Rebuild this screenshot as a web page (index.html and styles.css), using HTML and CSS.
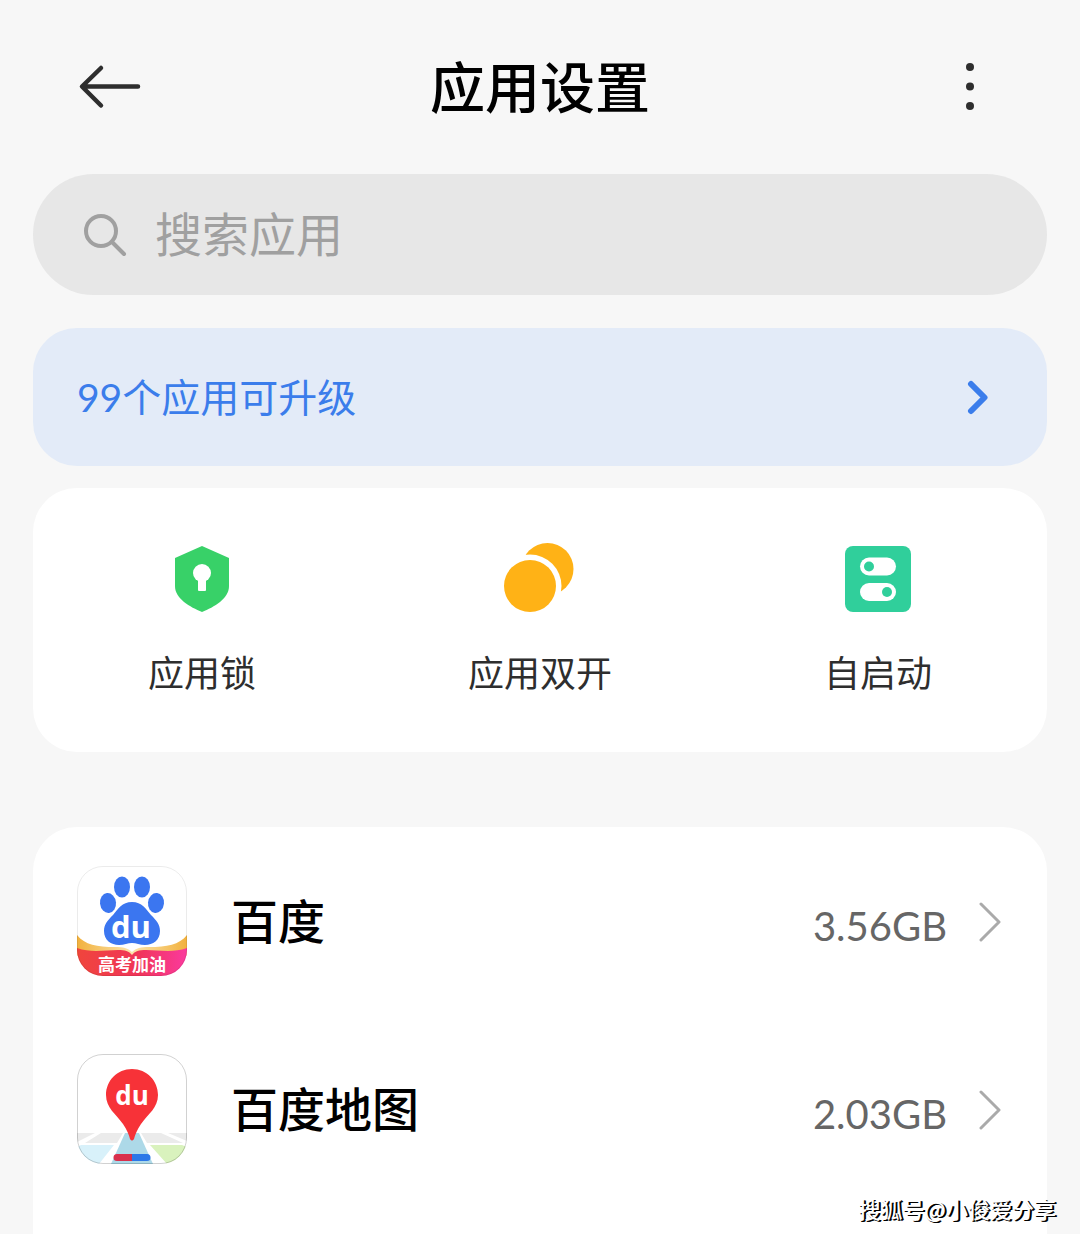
FILE: index.html
```
<!DOCTYPE html>
<html lang="zh-CN">
<head>
    <meta charset="UTF-8">
    <meta name="viewport" content="width=device-width, initial-scale=1.0">
    <title>应用设置</title>
    <link rel="stylesheet" href="styles.css">
</head>
<body>

<header class="topbar">
    <button class="icon-button" type="button" aria-label="返回">
        <svg width="64" height="48" viewBox="0 0 64 48" fill="none" stroke="#2e2e2e" stroke-width="4.5" stroke-linecap="round" stroke-linejoin="round">
            <path d="M23 5L4 23.500L23 42.500M5 23.500H60"/>
        </svg>
    </button>
    <h1 class="title">应用设置</h1>
    <button class="icon-button" type="button" aria-label="更多">
        <svg width="64" height="48" viewBox="0 0 64 48" fill="#2e2e2e">
            <circle cx="32" cy="4" r="4"/>
            <circle cx="32" cy="23.500" r="4"/>
            <circle cx="32" cy="43" r="4"/>
        </svg>
    </button>
</header>

<main class="content">
    <label class="search">
        <svg width="44" height="44" viewBox="0 0 44 44" fill="none" stroke="#a0a0a0" stroke-width="4" stroke-linecap="round">
            <circle cx="18" cy="18" r="15"/>
            <path d="M29 29L41 41"/>
        </svg>
        <input class="search-input" type="search" placeholder="搜索应用" aria-label="搜索应用">
    </label>

    <a class="upgrade" href="#">
        <span class="upgrade-text">99个应用可升级</span>
        <svg width="24" height="36" viewBox="0 0 24 36" fill="none" stroke="#3b7deb" stroke-width="6" stroke-linecap="round" stroke-linejoin="round">
            <path d="M4 5L17.500 18.500L4 32"/>
        </svg>
    </a>

    <nav class="card shortcuts">
        <a class="shortcut" href="#">
            <svg width="72" height="72" viewBox="0 0 72 72">
                <path fill="#38d168" d="M36 3L63 15V43C63 56 48 64 36 69C24 64 9 56 9 43V15Z"/>
                <circle cx="36" cy="30" r="9" fill="#fff"/>
                <path fill="#fff" d="M32 34H40V47Q40 48 39 48H33Q32 48 32 47Z"/>
            </svg>
            <span>应用锁</span>
        </a>
        <a class="shortcut" href="#">
            <svg width="72" height="72" viewBox="0 0 72 72">
                <circle cx="43.500" cy="26" r="26" fill="#ffb216"/>
                <circle cx="26" cy="43" r="31.500" fill="#fff"/>
                <circle cx="26" cy="43" r="26" fill="#ffb216"/>
            </svg>
            <span>应用双开</span>
        </a>
        <a class="shortcut" href="#">
            <svg width="72" height="72" viewBox="0 0 72 72">
                <rect x="3" y="3" width="66" height="66" rx="8" fill="#30cf9b"/>
                <rect x="18" y="14.500" width="36" height="18" rx="9" fill="#fff"/>
                <rect x="18" y="40" width="36" height="18" rx="9" fill="#fff"/>
                <circle cx="27" cy="23.500" r="5" fill="#30cf9b"/>
                <circle cx="45" cy="49" r="5" fill="#30cf9b"/>
            </svg>
            <span>自启动</span>
        </a>
    </nav>

    <section class="card app-list">
        <a class="app" href="#">
            <svg width="110" height="110" viewBox="0 0 110 110">
                <defs>
                    <linearGradient id="ribbon">
                        <stop offset="0" stop-color="#f0453c"/>
                        <stop offset="0.550" stop-color="#f03558"/>
                        <stop offset="1" stop-color="#fb3a9e"/>
                    </linearGradient>
                    <linearGradient id="gold">
                        <stop offset="0" stop-color="#f2b13d"/>
                        <stop offset="0.500" stop-color="#fbe4ac"/>
                        <stop offset="1" stop-color="#f2b13d"/>
                    </linearGradient>
                    <clipPath id="tile">
                        <rect width="110" height="110" rx="26"/>
                    </clipPath>
                </defs>
                <g clip-path="url(#tile)">
                    <rect width="110" height="110" fill="#fff"/>
                    <g fill="#3b76f0">
                        <ellipse cx="31" cy="37" rx="8" ry="10" transform="rotate(-6 31 37)"/>
                        <ellipse cx="45" cy="21" rx="8" ry="10.500"/>
                        <ellipse cx="65" cy="21" rx="8" ry="10.500"/>
                        <ellipse cx="79" cy="37" rx="8" ry="10" transform="rotate(6 79 37)"/>
                        <path d="M55 36C65 36 69 43 74 49C79 54 83 58 83 65C83 74 76 79 68 79C63 79 59 77 55 77C51 77 47 79 42 79C34 79 27 74 27 65C27 58 31 54 36 49C41 43 45 36 55 36Z"/>
                    </g>
                    <text class="du-text" x="54" y="72" font-size="31">du</text>
                    <path fill="url(#gold)" d="M0 69C8 79 20 81 38 81C46 81 51 82 55 86C59 82 64 81 72 81C90 81 102 79 110 69V90H0Z"/>
                    <path fill="url(#ribbon)" d="M0 82C14 87 28 84 41 84C48 84 52 85 55 89C58 85 62 84 69 84C82 84 96 87 110 82V110H0Z"/>
                    <text class="ribbon-text" x="55" y="105" font-size="17">高考加油</text>
                </g>
                <rect x="0.500" y="0.500" width="109" height="109" rx="25.500" fill="none" stroke="#000" stroke-opacity="0.080"/>
            </svg>
            <span class="app-name">百度</span>
            <span class="app-size">3.56GB</span>
            <svg class="chevron" width="24" height="42" viewBox="0 0 24 42">
                <path d="M2 4L20 22L2 40"/>
            </svg>
        </a>
        <a class="app" href="#">
            <svg width="110" height="110" viewBox="0 0 110 110">
                <g clip-path="url(#tile)">
                    <rect width="110" height="110" fill="#fff"/>
                    <path fill="#ebebeb" d="M0 79H18L0 88ZM24 79H46L40 89H8ZM64 79H84L106 89H70ZM91 79H110V87Z"/>
                    <path fill="#d8f1fa" d="M4 91H37L22 110H0V93Z"/>
                    <path fill="#d9f2bd" d="M73 91H105L110 93V110H90Z"/>
                    <path fill="#add9e8" d="M48 79H62L76 110H34Z"/>
                    <path fill="#d9304c" d="M40 100H55V107H40A3.500 3.500 0 0 1 40 100Z"/>
                    <path fill="#2c78e8" d="M55 100H70A3.500 3.500 0 0 1 70 107H55Z"/>
                    <path fill="#f73238" d="M55 15C70 15 81 27 81 41C81 54 71 60 64 70C60 76 58 81 57 85Q55 88 53 85C52 81 50 76 46 70C39 60 29 54 29 41C29 27 40 15 55 15Z"/>
                    <text class="du-text" x="55" y="51" font-size="26">du</text>
                </g>
                <rect x="0.500" y="0.500" width="109" height="109" rx="25.500" fill="none" stroke="#000" stroke-opacity="0.180"/>
            </svg>
            <span class="app-name">百度地图</span>
            <span class="app-size">2.03GB</span>
            <svg class="chevron" width="24" height="42" viewBox="0 0 24 42">
                <path d="M2 4L20 22L2 40"/>
            </svg>
        </a>
    </section>
</main>

<div class="watermark">搜狐号@小俊爱分享</div>

</body>
</html>
```

FILE: styles.css
```
* {
    box-sizing: border-box;
}
body {
    position: relative;
    display: flex;
    flex-direction: column;
    min-height: 100vh;
    margin: 0;
    background-color: #f7f7f7;
    color: #000;
    font-family: "Noto Sans CJK SC", sans-serif;
}
a {
    color: inherit;
    text-decoration: none;
}
svg {
    display: block;
    flex-shrink: 0;
}

/* Top bar */
.topbar {
    display: flex;
    align-items: center;
    justify-content: space-between;
    height: 174px;
    padding: 0 78px;
}
.icon-button {
    padding: 0;
    border: none;
    background: none;
    cursor: pointer;
}
.title {
    margin: 0;
    padding-bottom: 6px;
    font-size: 55px;
    font-weight: 500;
    line-height: 80px;
}

.content {
    display: flex;
    flex: 1;
    flex-direction: column;
    padding: 0 33px;
}

/* Search */
.search {
    display: flex;
    align-items: center;
    gap: 28px;
    height: 121px;
    padding: 0 50px;
    border-radius: 61px;
    background-color: #e7e7e7;
}
.search-input {
    flex: 1;
    min-width: 0;
    padding: 0 0 6px;
    border: none;
    outline: none;
    background: none;
    font-family: inherit;
    font-size: 47px;
    line-height: 68px;
}
.search-input::placeholder {
    color: #a0a0a0;
}

/* Upgrade banner */
.upgrade {
    display: flex;
    align-items: center;
    justify-content: space-between;
    height: 138px;
    margin-top: 33px;
    padding: 0 56px 0 44px;
    border-radius: 44px;
    background-color: #e3ebf8;
    color: #3b7deb;
    font-family: Lato, "Noto Sans CJK SC", sans-serif;
    font-size: 39px;
}
.upgrade-text {
    padding-bottom: 4px;
}

.card {
    border-radius: 44px;
    background-color: #fff;
}

/* Shortcuts */
.shortcuts {
    display: grid;
    grid-template-columns: repeat(3, 1fr);
    height: 264px;
    margin-top: 22px;
    padding-top: 55px;
}
.shortcut {
    display: flex;
    flex-direction: column;
    align-items: center;
    gap: 30px;
    color: #2e2e2e;
    font-size: 36px;
    line-height: 52px;
}

/* App list */
.app-list {
    flex: 1;
    margin-top: 75px;
    border-radius: 44px 44px 0 0;
}
.app {
    display: flex;
    align-items: center;
    height: 188px;
    padding: 0 44px;
}
.app-name {
    flex: 1;
    margin-left: 44px;
    padding-bottom: 6px;
    font-size: 47px;
    font-weight: 500;
}
.app-size {
    margin-right: 32px;
    padding-top: 10px;
    color: #666;
    font-family: Lato, sans-serif;
    font-size: 40px;
}
.chevron {
    fill: none;
    stroke: #aaa;
    stroke-width: 3;
    stroke-linecap: round;
    stroke-linejoin: round;
}
.du-text {
    fill: #fff;
    font-family: "Open Sans", sans-serif;
    font-weight: 700;
    text-anchor: middle;
}
.ribbon-text {
    fill: #fff;
    font-weight: 700;
    text-anchor: middle;
}

.watermark {
    position: absolute;
    right: 24px;
    bottom: 10px;
    color: #fff;
    font-size: 22px;
    font-weight: 500;
    line-height: 32px;
    text-shadow: 1px 1px 0 #000, 2px 1px 0 #000;
}
```
